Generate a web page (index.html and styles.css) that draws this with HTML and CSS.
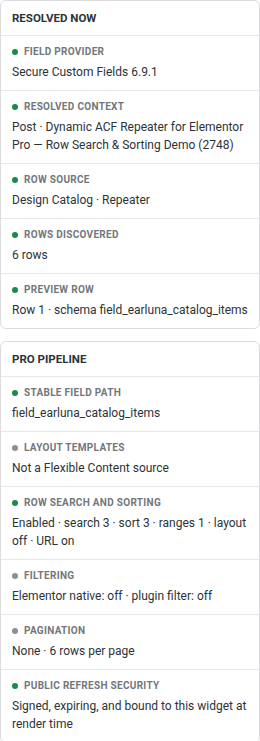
FILE: index.html
```html
<!DOCTYPE html>
<html lang="en">
<head>
    <meta charset="UTF-8">
    <meta name="viewport" content="width=device-width, initial-scale=1.0">
    <title>Repeater Diagnostics</title>
    <link rel="stylesheet" href="styles.css">
</head>
<body>
    <div class="panel">
        <section class="card">
            <h2 class="card-title">Resolved now</h2>
            <div class="row">
                <div class="row-label"><span class="dot ok"></span>Field provider</div>
                <div class="row-value">Secure Custom Fields 6.9.1</div>
            </div>
            <div class="row">
                <div class="row-label"><span class="dot ok"></span>Resolved context</div>
                <div class="row-value">Post · Dynamic ACF Repeater for Elementor Pro — Row Search &amp; Sorting Demo (2748)</div>
            </div>
            <div class="row">
                <div class="row-label"><span class="dot ok"></span>Row source</div>
                <div class="row-value">Design Catalog · Repeater</div>
            </div>
            <div class="row">
                <div class="row-label"><span class="dot ok"></span>Rows discovered</div>
                <div class="row-value">6 rows</div>
            </div>
            <div class="row">
                <div class="row-label"><span class="dot ok"></span>Preview row</div>
                <div class="row-value">Row 1 · schema field_earluna_catalog_items</div>
            </div>
        </section>

        <section class="card">
            <h2 class="card-title">Pro pipeline</h2>
            <div class="row">
                <div class="row-label"><span class="dot ok"></span>Stable field path</div>
                <div class="row-value">field_earluna_catalog_items</div>
            </div>
            <div class="row">
                <div class="row-label"><span class="dot off"></span>Layout templates</div>
                <div class="row-value">Not a Flexible Content source</div>
            </div>
            <div class="row">
                <div class="row-label"><span class="dot ok"></span>Row search and sorting</div>
                <div class="row-value">Enabled · search 3 · sort 3 · ranges 1 · layout off · URL on</div>
            </div>
            <div class="row">
                <div class="row-label"><span class="dot off"></span>Filtering</div>
                <div class="row-value">Elementor native: off · plugin filter: off</div>
            </div>
            <div class="row">
                <div class="row-label"><span class="dot off"></span>Pagination</div>
                <div class="row-value">None · 6 rows per page</div>
            </div>
            <div class="row">
                <div class="row-label"><span class="dot ok"></span>Public refresh security</div>
                <div class="row-value">Signed, expiring, and bound to this widget at render time</div>
            </div>
        </section>
    </div>
</body>
</html>
```

FILE: styles.css
```css
:root {
    --text: #2c3338;
    --text-light: #72777c;
    --border: #dcdcde;
    --divider: #e5e7eb;
    --ok: #1a8a4a;
    --off: #8c8f94;
    --radius: 6px;
}

body {
    margin: 0;
    font-family: Roboto, "Liberation Sans", sans-serif;
    color: var(--text);
    background: #fff;
}

.panel {
    display: flex;
    flex-direction: column;
    gap: 12px;
}

.card {
    border: 1px solid var(--border);
    border-radius: var(--radius);
    background: #fff;
}

.card-title {
    margin: 0;
    height: 34px;
    padding: 0 11px;
    display: flex;
    align-items: center;
    font-size: 11.5px;
    font-weight: 700;
    text-transform: uppercase;
    color: #2c3338;
    border-bottom: 1px solid var(--divider);
}

.row {
    padding: 9px 11px;
    display: flex;
    flex-direction: column;
    gap: 4px;
    border-bottom: 1px solid var(--divider);
}

.row:last-child {
    border-bottom: none;
}

.row-label {
    display: flex;
    align-items: center;
    gap: 6px;
    font-size: 10px;
    line-height: 14px;
    font-weight: 700;
    text-transform: uppercase;
    letter-spacing: 0.3px;
    color: var(--text-light);
}

.dot {
    width: 6px;
    height: 6px;
    border-radius: 50%;
    flex-shrink: 0;
}

.dot.ok {
    background: var(--ok);
}

.dot.off {
    background: var(--off);
}

.row-value {
    font-size: 12px;
    line-height: 18px;
    color: #2c3338;
}
```
